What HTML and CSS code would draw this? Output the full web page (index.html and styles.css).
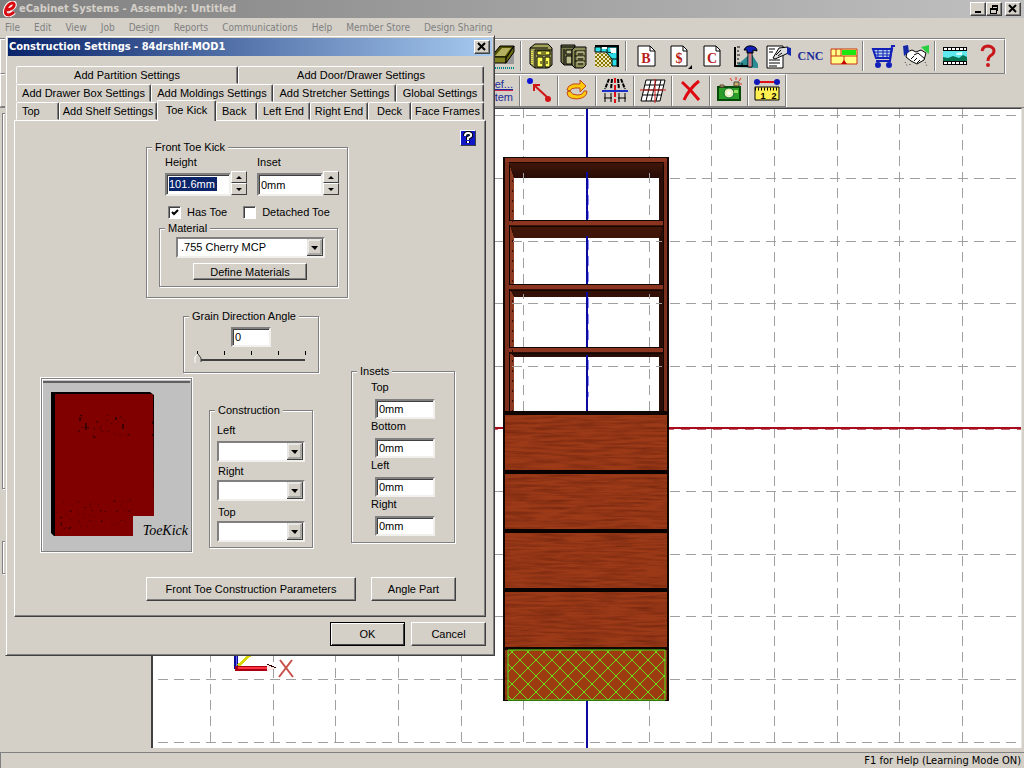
FILE: index.html
```html
<!DOCTYPE html>
<html lang="en">
<head>
<meta charset="utf-8">
<title>eCabinet Systems - Assembly: Untitled</title>
<link rel="stylesheet" href="styles.css">
</head>
<body class="app">
<header class="titlebar">
  <svg class="logo" width="16" height="16" viewBox="0 0 16 16" aria-hidden="true"><path d="M3 9Q10 9 12 5Q13 2 10 2Q6 3 4 8Q2 14 7 14Q10 13 12 11" fill="none" stroke="#fff" stroke-width="5"/><path d="M3 9Q10 9 12 5Q13 2 10 2Q6 3 4 8Q2 14 7 14Q10 13 12 11" fill="none" stroke="#d80c10" stroke-width="3"/></svg>
  <h1 class="title-text">eCabinet Systems - Assembly: Untitled</h1>
  <div class="caption-group">
    <button class="caption" aria-label="Minimize"><svg width="10" height="10"><path d="M2 8h6" stroke="#000" stroke-width="2"/></svg></button>
    <button class="caption" aria-label="Restore"><svg width="10" height="10" shape-rendering="crispEdges"><path d="M3 1h6M3 2h6M3 1v3M8 1v5H7M1 4h6M1 5h6M1 4v5h6V4" fill="none" stroke="#000"/></svg></button>
  </div>
  <button class="caption" aria-label="Close"><svg width="10" height="10"><path d="M1 1l7 7M8 1l-7 7" stroke="#000" stroke-width="2"/></svg></button>
</header>
<nav class="menubar">
  <a href="#">File</a><a href="#">Edit</a><a href="#">View</a><a href="#">Job</a><a href="#">Design</a><a href="#">Reports</a><a href="#">Communications</a><a href="#">Help</a><a href="#">Member Store</a><a href="#">Design Sharing</a>
</nav>
<div class="toolbar toolbar-main">
  <button class="tool tool-first" aria-label="Drawer box"><svg width="28" height="28"><path d="M2 26h24" stroke="#088" stroke-dasharray="1 1" stroke-width="2"/><path d="M15 22l10-13v13z" fill="#999"/><path d="M2 15L11 4H25L17 16z" fill="#505000" stroke="#000"/><path d="M6 14l7-8h9l-6 8z" fill="#b4b060"/><path d="M2 15h15v6H2z" fill="#808020" stroke="#000"/><path d="M17 16l8-12v6l-8 11z" fill="#686810" stroke="#000"/></svg></button>
  <span class="sep"></span>
  <button class="tool" aria-label="Cabinet"><svg width="28" height="28"><path d="M3 6L8 2H21L25 6V23L21 26H8L3 22z" fill="#a0a058" stroke="#000"/><path d="M3 6H8L21 6M8 8H25M8 8V26" fill="none" stroke="#000"/><path d="M10 9h13v4H10zM10 15h6v10h-6zM18 15h5v10h-5z" fill="#ff5" stroke="#000"/><path d="M14 11h5M14 19v3M20 19v3" stroke="#000"/><path d="M5 9v13" stroke="#eee64c" stroke-width="2" stroke-dasharray="1 1"/></svg></button>
  <button class="tool" aria-label="Cabinet group"><svg width="28" height="28"><path d="M1 3H15V23H4L1 20z" fill="#77774a" stroke="#000"/><path d="M1 5H15M4 7V23M6 8H12V12H6zM6 14H12V22H6z" fill="#bcbc8a" stroke="#000"/><path d="M12 8L15 5H26V23L23 26H15L12 23z" fill="#8c8c58" stroke="#000"/><path d="M15 9H25M15 14H25M15 19H25M15 9V26M18 12h5M18 17h5M18 22h5" stroke="#000"/><path d="M17 10h7M17 15h7M17 20h7" stroke="#d8d8b0"/></svg></button>
  <button class="tool" aria-label="Room layout"><svg width="28" height="28"><defs><pattern id="chk" width="4" height="4" patternUnits="userSpaceOnUse"><path d="M0 0h2v2H0zM2 2h2v2H2z" fill="#887700"/></pattern></defs><path d="M2 11h17v14H2z" fill="#eee8bc"/><path d="M2 11h17v14H2z" fill="url(#chk)"/><path d="M2 4H25V25" fill="none" stroke="#000" stroke-width="2"/><path d="M2 5H24V24H19V17L13 10H2z" fill="#2de0e8" stroke="#000"/><path d="M8 5v5M14 5v5L20 11M19 17h5" stroke="#000" fill="none"/><path d="M9 5h5v2H9zM17 6h6v5h-5z" fill="#fff"/></svg></button>
  <span class="sep"></span>
  <button class="tool" aria-label="Buy list"><svg width="28" height="28"><path d="M6 4H18L23 9V24H6z" fill="#fff" stroke="#000"/><path d="M18 4V9H23" fill="none" stroke="#000"/><text class="glyph" x="14" y="21">B</text></svg></button>
  <button class="tool" aria-label="Cost"><svg width="28" height="28"><path d="M6 4H18L22 8V24H6z" fill="#fff" stroke="#000"/><path d="M18 4V9H22" fill="none" stroke="#000"/><text class="glyph" x="14" y="21">$</text><path d="M27 23v4h-4z"/></svg></button>
  <button class="tool" aria-label="Cut list"><svg width="28" height="28"><path d="M6 4H18L22 8V24H6z" fill="#fff" stroke="#000"/><path d="M18 4V9H22" fill="none" stroke="#000"/><text class="glyph" x="14" y="21">C</text></svg></button>
  <button class="tool" aria-label="Construction tools"><svg width="28" height="28"><path d="M4 25L20 11L27 22V26z" fill="#2c8c94"/><path d="M4 5V24H18" fill="none" stroke="#000" stroke-width="2"/><path d="M6 5h3M6 9h2M6 13h3M6 17h2M6 21h3M11 21v3" stroke="#000"/><path d="M13 8Q15 3 21 4Q26 5 26 9L22 8V11H16V8z" fill="#1020b8" stroke="#000"/><path d="M17 11h4v14h-4z" fill="#eef" stroke="#000"/><path d="M19 11v14" stroke="#c00000"/></svg></button>
  <button class="tool" aria-label="Reports"><svg width="28" height="28"><path d="M3 4H19V26H3z" fill="#fff" stroke="#000"/><path d="M5 7h6M5 10h4M5 18h11M5 21h11M5 24h8" stroke="#000"/><path d="M9 16L15 6L24 5V11L20 13L11 17z" fill="#ddd" stroke="#000"/><path d="M12 13L17 8M14 14l4-3" stroke="#000"/><path d="M23 5l4 1v8l-4-2z" fill="#1828a8"/></svg></button>
  <button class="tool cnc">CNC</button>
  <button class="tool" aria-label="Nesting"><svg width="28" height="28"><path d="M1 7H27V22H1z" fill="#ff8" stroke="#c83010" stroke-width="1"/><path d="M12 8H26V13H12z" fill="#1ae810"/><path d="M1 14H27M6 7v7M11 7v7M14 14v8" stroke="#c83010"/><path d="M11 22l3-4 3 4z" fill="#c80000"/></svg></button>
  <span class="sep"></span>
  <button class="tool" aria-label="Shopping cart"><svg width="28" height="28" fill="none" stroke="#1220b8" stroke-width="2"><path d="M4 7H23L21 16H7z" fill="#b8d4e8"/><path d="M4 10H23M6 13H22M9 7v9M14 7v9M18 7v9" stroke-width="1"/><path d="M26 4h-3L21 19H7"/><circle cx="9" cy="23" r="2" fill="#1220b8"/><circle cx="20" cy="23" r="2" fill="#1220b8"/></svg></button>
  <button class="tool" aria-label="Partners"><svg width="28" height="28"><path d="M5 10L10 8L14 10L19 8L24 11L22 18L15 22L9 19L4 15z" fill="#fff" stroke="#000"/><path d="M12 13l4-2 7 6M9 17l3-3M12 19l3-3M15 21l3-3" fill="none" stroke="#000"/><path d="M1 4l5-1 1 7-5 4z" fill="#1428a8"/><path d="M19 5l8-2v9l-4-3z" fill="#28d040"/><path d="M3 20l3 5M8 22v3M23 20l2 4" stroke="#333" stroke-dasharray="1 2"/></svg></button>
  <span class="sep"></span>
  <button class="tool" aria-label="Video"><svg width="28" height="28"><path d="M2 5h24v18H2z"/><path d="M3 7h22M3 21h22" stroke="#fff" stroke-width="2" stroke-dasharray="3 1"/><path d="M2 9h24v10H2z" fill="#5fe8ee"/><path d="M2 19v-4l5 1 5-2 6 2 4-3 4 2v4z" fill="#087454"/><path d="M15 11l6-1v3h-5z" fill="#d8ffff"/></svg></button>
  <button class="tool" aria-label="Help"><svg width="28" height="28"><path d="M8 9Q9 4 14 4Q20 5 20 9Q20 12 16 14Q14 16 14 19" fill="none" stroke="#c8181c" stroke-width="3"/><circle cx="14" cy="23" r="2" fill="#c8181c"/></svg></button>
</div>
<div class="toolbar toolbar-edit">
  <button class="tool ref"><span class="ref-top">Ref...</span><span>Item</span></button>
  <span class="sep"></span>
  <button class="tool" aria-label="Move"><svg width="28" height="28"><path d="M9 8L23 21M9 14V8h6" fill="none" stroke="#d01818" stroke-width="2"/><circle cx="5" cy="4" r="3" fill="#0c14d8"/><circle cx="23" cy="22" r="3" fill="#d01818"/></svg></button>
  <span class="sep"></span>
  <button class="tool" aria-label="Rotate"><svg width="28" height="28"><path d="M17 3v4H10Q4 9 4 13l3 1q1-3 5-3h5v4l6-6z" fill="#ffc90c" stroke="#c04818"/><path d="M4 15q0 7 10 7q10-1 10-8h-3q-1 4-7 4q-5 0-7-4z" fill="#ffc90c" stroke="#c04818"/></svg></button>
  <span class="sep"></span>
  <button class="tool" aria-label="Align"><svg width="28" height="28"><path d="M8 2L4 12M11 2L10 12M17 2l1 10M20 2l4 10" stroke="#000" stroke-width="2" stroke-dasharray="4 1"/><path d="M4 16v9M10 16v9M18 16v9M24 16v9M3 21h8M17 21h8" stroke="#000"/><path d="M14 1V26" stroke="#e01018" stroke-width="2" stroke-dasharray="5 2"/><path d="M1 14H27" stroke="#1830c8" stroke-width="2"/></svg></button>
  <span class="sep"></span>
  <button class="tool" aria-label="Grid"><svg width="28" height="28"><path d="M7 3H26L21 24H2zM6 8H25M5 13H24M4 18H23M12 3L7 24M17 3l-5 21M22 3l-5 21" fill="#fff" stroke="#000"/><path d="M1 13H27M16 2V26" stroke="#d41c1c"/></svg></button>
  <span class="sep"></span>
  <button class="tool" aria-label="Delete"><svg width="28" height="28"><path d="M5 5Q14 13 22 23M22 4Q12 12 7 23" fill="none" stroke="#e00810" stroke-width="3"/></svg></button>
  <span class="sep"></span>
  <button class="tool" aria-label="Snapshot"><svg width="28" height="28"><path d="M3 10H25V23H3z" fill="#2c9e28" stroke="#064c08" stroke-width="2"/><path d="M5 8h4v2H5zM19 5h5v4h-5z" fill="#c8b070" stroke="#543"/><circle cx="14" cy="16" r="5" fill="#e8f0b8" stroke="#063"/><circle cx="14" cy="16" r="2" fill="#fff"/><path d="M19 13h4v3h-4z" fill="#9adf60"/><path d="M15 1l2 3M21 0v3M26 1l-2 3M27 7h-2" stroke="#e83018"/></svg></button>
  <span class="sep"></span>
  <button class="tool" aria-label="Measure"><svg width="28" height="28"><path d="M4 5H24" stroke="#e01018" stroke-width="2"/><circle cx="4" cy="5" r="3" fill="#1018b8"/><circle cx="24" cy="5" r="3" fill="#1018b8"/><path d="M2 10H26V23H2z" fill="#ffef50" stroke="#000"/><path d="M2 12H26" stroke="#000" stroke-width="3" stroke-dasharray="1 2"/><text class="ruler" x="10" y="22">1</text><text class="ruler" x="21" y="22">2</text></svg></button>
</div>
<main class="workspace">
  <aside class="side"><div class="side-frame side-tall"></div><div class="side-frame side-short"></div></aside>
  <section class="viewport" aria-label="Assembly view">
    <svg class="scene" width="100%" height="100%">
      <defs>
        <filter id="wood" x="0" y="0" width="100%" height="100%" color-interpolation-filters="sRGB"><feTurbulence type="fractalNoise" baseFrequency="0.03 0.4" numOctaves="3" seed="4"/><feColorMatrix values="0 0 0 0 .4  0 0 0 0 .12  0 0 0 0 .04  0 0 0 1.2 -0.42"/></filter>
        <pattern id="hatch" x="528" y="668" width="16" height="16" patternUnits="userSpaceOnUse"><path d="M-1 -1L17 17M17 -1L-1 17" stroke="#6ae01c"/></pattern>
        <linearGradient id="shade" x1="0" y1="0" x2="0" y2="1"><stop offset="0" stop-color="#401608"/><stop offset="1" stop-color="#280c06"/></linearGradient>
      </defs>
      <g transform="translate(-153 -109)" shape-rendering="crispEdges">
        <g stroke="#a0a0a0" stroke-dasharray="10 6">
          <path d="M158 115H3000M158 178H3000M158 241H3000M158 303H3000M158 366H3000M158 491H3000M158 554H3000M158 616H3000M158 679H3000M158 742H3000"/>
          <path d="M210 742V109M273 742V109M335 742V109M398 742V109M461 742V109M523 742V109M649 742V109M711 742V109M774 742V109M837 742V109M899 742V109M962 742V109"/>
        </g>
        <path d="M153 428H3000" stroke="#a80c1c" stroke-width="2"/><path d="M153 429H3000" stroke="#c86068" stroke-dasharray="9 7"/>
        <path d="M587 109V748" stroke="#0a0aa0" stroke-width="2"/>
        <path d="M503 157H669V701H503z" fill="#120603"/>
        <path d="M505 159H509V411H505zM664 159H668V411H664z" fill="#7b2f1c"/>
        <path d="M510 163L514 172V411H510z" fill="#8b3921"/><path d="M663 163L659 172V411H663z" fill="#2a0e07"/>
        <path d="M509 163H664L659 178H514z" fill="url(#shade)"/>
        <path d="M514 178H659V220H514zM514 238H659V284H514zM514 297H659V347H514zM514 357H659V411H514z" fill="#fff"/>
        <path d="M510 225H663L659 238H514zM510 289H663L659 297H514zM510 352H663L659 357H514z" fill="url(#shade)"/>
        <path d="M505 158H668V162H505zM509 221H663V225H509zM509 285H663V289H509zM509 348H663V352H509z" fill="#8b3520"/>
        <path d="M509 220H663M509 226H663M509 284H663M509 290H663M509 347H663M509 353H663" stroke="#120603"/>
        <g stroke="#a0a0a0" stroke-dasharray="10 6"><path d="M512 241H662M512 303H662M512 366H662M523 411V357M649 411V357M523 347V294M649 347V294M523 284V236M649 284V236M523 215V172M649 215V172"/></g>
        <path d="M587 172V220M587 236V284M587 292V347M587 355V411" stroke="#0a0aa0" stroke-width="2"/><path d="M588 179V219M588 240V283M588 298V346M588 360V397" stroke="#9090ff" stroke-dasharray="10 6"/>
        <path d="M512 180V411" stroke="#2a0e07" stroke-dasharray="2 8"/>
        <path d="M505 415H668V649H505zM505 650H668V700H505z" fill="#9c3a18"/>
        <g filter="url(#wood)"><path d="M505 415H668V700H505z"/></g>
        <path d="M504 413H669M504 648H669" stroke="#120603" stroke-width="2"/><path d="M504 472H669M504 531H669M504 590H669" stroke="#080302" stroke-width="4"/><path d="M504 157V701M668 157V701" stroke="#120603" stroke-width="2"/>
        <path d="M508 650H665V700H508z" fill="#9c3a10"/><path d="M508 650H665V700H508z" fill="url(#hatch)" stroke="#50e818" shape-rendering="auto"/>
        <path d="M236 640V669" stroke="#0c0c94" stroke-width="4"/><path d="M236 640V667" stroke="#6868ff"/>
        <path d="M238 666L250 655" stroke="#d8d800" stroke-width="3"/><path d="M235 668H268" stroke="#a80010" stroke-width="5"/><path d="M238 668H267" stroke="#ff3440" stroke-width="2"/><path d="M267 664L276 668L267 672z" fill="#fde8e8"/><path d="M267 664L276 668" stroke="#300"/>
        <path d="M280 660L293 677M292 660L279 677" stroke="#c85048" stroke-width="2" shape-rendering="auto"/>
      </g>
    </svg>
  </section>
</main>
<footer class="status">F1 for Help (Learning Mode ON)</footer>

<form class="dialog" role="dialog" aria-labelledby="dlg-title">
  <div class="dialog-title"><h2 class="title-text" id="dlg-title">Construction Settings - 84drshlf-MOD1</h2>
    <button type="button" class="caption" aria-label="Close"><svg width="10" height="10"><path d="M1 1l7 7M8 1l-7 7" stroke="#000" stroke-width="2"/></svg></button></div>
  <div class="dialog-body">
    <div class="tabs" role="tablist">
      <div class="tab-row row-a"><button type="button" role="tab">Add Partition Settings</button><button type="button" role="tab">Add Door/Drawer Settings</button></div>
      <div class="tab-row row-b"><button type="button" role="tab">Add Drawer Box Settings</button><button type="button" role="tab">Add Moldings Settings</button><button type="button" role="tab">Add Stretcher Settings</button><button type="button" role="tab">Global Settings</button></div>
      <div class="tab-row row-c"><button type="button" role="tab" class="tab-left">Top</button><button type="button" role="tab">Add Shelf Settings</button><button type="button" role="tab" class="active" aria-selected="true">Toe Kick</button><button type="button" role="tab" class="tab-left">Back</button><button type="button" role="tab">Left End</button><button type="button" role="tab">Right End</button><button type="button" role="tab">Deck</button><button type="button" role="tab">Face Frames</button></div>
    </div>
    <div class="panel" role="tabpanel">
      <div class="panel-head">
        <fieldset class="group front"><legend>Front Toe Kick</legend>
          <div class="dims">
            <div class="dim"><label for="height">Height</label><div class="spin"><div class="field selected-wrap"><input id="height" class="selected" value="101.6mm"></div><div class="arrows"><button type="button" class="up" aria-label="Increase height"></button><button type="button" class="down" aria-label="Decrease height"></button></div></div></div>
            <div class="dim"><label for="inset">Inset</label><div class="spin"><input id="inset" class="field" value="0mm"><div class="arrows"><button type="button" class="up" aria-label="Increase inset"></button><button type="button" class="down" aria-label="Decrease inset"></button></div></div></div>
          </div>
          <div class="checks"><label><input type="checkbox" checked>Has Toe</label><label><input type="checkbox">Detached Toe</label></div>
          <fieldset class="group material"><legend>Material</legend>
            <select class="combo" aria-label="Material"><option>.755 Cherry MCP</option></select>
            <button type="button" class="btn define">Define Materials</button>
          </fieldset>
        </fieldset>
        <button type="button" class="help" aria-label="Help"><svg width="14" height="14"><path d="M4 5Q4 2 7 2Q11 2 10 5Q9 6 7 7V9M7 10v2" fill="none" stroke="#000" stroke-width="4"/><path d="M4 5Q4 2 7 2Q11 2 10 5Q9 6 7 7V9M7 10v2" fill="none" stroke="#fff" stroke-width="2"/></svg></button>
      </div>
      <div class="settings">
        <fieldset class="group grain"><legend>Grain Direction Angle</legend>
          <input class="field angle" aria-label="Grain Direction Angle" value="0">
          <div class="ticks"><i></i><i></i><i></i><i></i><i></i></div>
          <input type="range" class="slider" aria-label="Grain angle slider" min="0" max="90" value="0">
        </fieldset>
        <figure class="preview">
          <svg width="147" height="168" aria-hidden="true"><defs><filter id="speck" x="0" y="0" width="100%" height="100%"><feTurbulence type="fractalNoise" baseFrequency="0.3" numOctaves="2" seed="8"/><feColorMatrix values="0 0 0 0 0 0 0 0 0 0 0 0 0 0 0 0 0 0 8 -5.4"/></filter></defs>
          <path d="M0 2H147" stroke="#000"/><path d="M8 12H107L111 15V136H90V156H11L8 153z"/><path d="M12 14H110L111 136H90V156H12z" fill="#800000"/><g filter="url(#speck)" opacity=".6"><path d="M34 35H88V58H34z"/></g><g filter="url(#speck)" opacity=".6"><path d="M14 120H88V150H14z"/></g><path d="M43 43v7M80 44v5M37 37v4M73 37v3M110 41v3M110 54v2" stroke="#000"/></svg>
          <figcaption>ToeKick</figcaption>
        </figure>
        <fieldset class="group construction"><legend>Construction</legend>
          <div class="stack"><label for="c-left">Left</label><select id="c-left" class="combo"><option></option></select></div>
          <div class="stack"><label for="c-right">Right</label><select id="c-right" class="combo"><option></option></select></div>
          <div class="stack"><label for="c-top">Top</label><select id="c-top" class="combo"><option></option></select></div>
        </fieldset>
        <fieldset class="group insets"><legend>Insets</legend>
          <div class="stack"><label for="i-top">Top</label><input id="i-top" class="field" value="0mm"></div>
          <div class="stack"><label for="i-bottom">Bottom</label><input id="i-bottom" class="field" value="0mm"></div>
          <div class="stack"><label for="i-left">Left</label><input id="i-left" class="field" value="0mm"></div>
          <div class="stack"><label for="i-right">Right</label><input id="i-right" class="field" value="0mm"></div>
        </fieldset>
      </div>
      <div class="panel-actions"><button type="button" class="btn params">Front Toe Construction Parameters</button><button type="button" class="btn angle-part">Angle Part</button></div>
    </div>
    <div class="dialog-actions"><button type="submit" class="btn ok">OK</button><button type="button" class="btn">Cancel</button></div>
  </div>
</form>
</body>
</html>
```
FILE: styles.css
```css
* { box-sizing: border-box; }
.app {
  --face: #d4d0c8;
  --dark: #404040;
  --mid: #808080;
  margin: 0;
  height: 100vh;
  display: flex;
  flex-direction: column;
  overflow: hidden;
  background: var(--face);
  color: #000;
  font: 11px/13px "Liberation Sans", Arial, sans-serif;
}
button, input, select { font: inherit; color: inherit; margin: 0; border-radius: 0; }
button { padding: 0; border: 0; background: var(--face); }
svg { display: block; }

.titlebar {
  display: flex;
  align-items: center;
  flex: 0 0 18px;
  padding: 0 3px 0 2px;
  background: linear-gradient(90deg, #808080, #c0c0c0);
  color: var(--face);
}
.title-text { margin: 0; font: bold 11px/18px "DejaVu Sans Condensed", "DejaVu Sans", sans-serif; white-space: nowrap; }
.titlebar .title-text { flex: 1; padding-left: 1px; }
.caption-group { display: flex; margin-right: 3px; }
.caption {
  display: flex;
  align-items: center;
  justify-content: center;
  width: 16px;
  height: 14px;
  color: #000;
  border: 1px solid;
  border-color: #fff var(--dark) var(--dark) #fff;
  box-shadow: inset -1px -1px var(--mid);
}
.menubar {
  display: flex;
  gap: 14px;
  flex: 0 0 21px;
  padding: 0 5px;
  font: 10px/20px "DejaVu Sans Condensed", "DejaVu Sans", sans-serif;
}
.menubar a { color: var(--mid); text-decoration: none; white-space: nowrap; }

.toolbar {
  display: flex;
  align-items: center;
  align-self: flex-start;
  border: 1px solid;
  border-color: #fff var(--mid) var(--mid) #fff;
  box-shadow: 1px 0 #fff;
}
.toolbar-main { height: 35px; padding-left: 487px; padding-bottom: 1px; box-shadow: 1px 0 #fff, 0 -1px var(--mid); }
.toolbar-edit { height: 33px; padding-left: 482px; }
.tool { display: flex; align-items: center; justify-content: center; width: 33px; height: 30px; }
.tool-first { width: 30px; }
.toolbar-edit .tool { width: 36px; }
.sep { width: 2px; height: 30px; background: linear-gradient(90deg, #808080 50%, #fff 50%); }
.toolbar-main .sep { margin: 0 2px; }
.glyph { font: bold 14px "Liberation Serif", serif; fill: #b81c20; text-anchor: middle; }
.ruler { font: bold 9px "Liberation Sans", sans-serif; text-anchor: middle; }
.cnc { font: bold 12px "Liberation Serif", serif; color: #1c2c98; }
.toolbar-edit .ref { flex-direction: column; align-items: flex-end; padding-right: 6px; color: #1c2c98; line-height: 12px; }
.ref-top { border-bottom: 1px solid #d02050; text-decoration: underline; }

.workspace { flex: 1; display: flex; min-height: 0; padding-right: 2px; border-top: 1px solid var(--mid); }
.side { flex: 0 0 151px; padding: 5px 6px 0 2px; }
.side-frame { border: 1px solid var(--mid); box-shadow: inset 1px 1px #fff, 1px 1px #fff; }
.side-tall { height: 376px; }
.side-short { height: 33px; margin-top: 52px; }
.viewport {
  flex: 1;
  min-width: 0;
  overflow: hidden;
  background: #fff;
  border-top: 1px solid var(--dark);
  border-left: 2px solid var(--dark);
  border-right: 1px solid #e8e6e0;
}
.status {
  flex: 0 0 16px;
  margin-top: 4px;
  padding-right: 3px;
  border-top: 1px solid var(--mid);
  border-left: 1px solid var(--mid);
  font: 11px/15px "DejaVu Sans Condensed", "DejaVu Sans", sans-serif;
  text-align: right;
}

.dialog {
  position: absolute;
  left: 5px;
  top: 35px;
  width: 490px;
  padding: 1px;
  background: var(--face);
  border: 1px solid;
  border-color: var(--face) var(--dark) var(--dark) var(--face);
  box-shadow: inset 1px 1px #fff, inset -1px -1px var(--mid);
}
.dialog-title {
  display: flex;
  align-items: center;
  justify-content: space-between;
  height: 18px;
  margin: 1px 1px 0;
  padding: 0 2px 0 1px;
  background: linear-gradient(90deg, #0a246a, #a6caf0);
  color: #fff;
}
.dialog-body { padding: 10px 7px 8px; }
.tabs { padding: 0 2px; }
.tab-row { display: grid; height: 18px; }
.row-a { grid-template-columns: 222fr 246fr; }
.row-b { grid-template-columns: 135fr 122fr 123fr 88fr; }
.row-c { grid-template-columns: 43fr 98fr 59fr 41fr 53fr 58fr 43fr 73fr; }
.tab-row button {
  height: 18px;
  white-space: nowrap;
  border: 1px solid;
  border-color: #fff var(--dark) transparent #fff;
  border-radius: 2px 2px 0 0;
  box-shadow: inset -1px 0 var(--mid);
}
.tab-row .tab-left { text-align: left; padding-left: 5px; }
.tab-row .active { position: relative; height: 21px; margin-top: -2px; border-bottom: 0; padding-bottom: 2px; }
.panel {
  height: 497px;
  padding: 9px 9px 0 0;
  border: 1px solid;
  border-color: #fff var(--dark) var(--dark) #fff;
  box-shadow: inset -1px -1px var(--mid);
}
.panel-head { display: flex; justify-content: space-between; align-items: flex-start; }
.help {
  width: 16px;
  height: 16px;
  background: #1018c8;
  border: 1px solid;
  border-color: #fff var(--dark) var(--dark) #fff;
}
.group {
  min-width: 0;
  margin: 0;
  padding: 0;
  border: 1px solid var(--mid);
  box-shadow: inset 1px 1px #fff, 1px 1px #fff;
}
.group > legend { margin-left: 5px; padding: 0 3px; background: var(--face); }
.field {
  width: 60px;
  height: 20px;
  padding: 0 2px;
  background: #fff;
  border: 2px solid;
  border-color: var(--mid) #f2f0ec #f2f0ec var(--mid);
  box-shadow: inset 1px 1px var(--dark);
}
.btn {
  height: 24px;
  border: 1px solid;
  border-color: #fff var(--dark) var(--dark) #fff;
  box-shadow: inset -1px -1px var(--mid);
}
.combo {
  appearance: none;
  height: 21px;
  padding: 0 18px 0 3px;
  border: 2px solid;
  border-color: var(--mid) #f2f0ec #f2f0ec var(--mid);
  background: #fff url("data:image/svg+xml,%3Csvg xmlns='http://www.w3.org/2000/svg' width='16' height='17'%3E%3Cpath d='M0 0h16v17H0z' fill='%23404040'/%3E%3Cpath d='M0 0h15v16H0z' fill='%23d4d0c8'/%3E%3Cpath d='M1 15V1h13' fill='none' stroke='%23fff'/%3E%3Cpath d='M14 1v14H1' fill='none' stroke='%23808080'/%3E%3Cpath d='M4 7h7l-3 4z'/%3E%3C/svg%3E") no-repeat right center;
}

.front { width: 202px; height: 157px; margin: 11px 0 0 131px; }
.dims { display: flex; gap: 10px; padding: 2px 0 0 18px; }
.dim > label { display: block; }
.spin { display: flex; width: 82px; margin-top: 2px; padding-top: 2px; }
.spin .field { width: 66px; height: 23px; }
.selected-wrap { display: flex; align-items: flex-start; padding: 2px; }
.selected { width: 48px; height: 14px; padding: 0; border: 0; background: #0a246a; color: #fff; }
.arrows { display: flex; flex-direction: column; width: 16px; margin-top: -2px; }
.arrows button {
  height: 12px;
  border: 1px solid;
  border-color: #fff var(--dark) var(--dark) #fff;
  background: var(--face) url("data:image/svg+xml,%3Csvg xmlns='http://www.w3.org/2000/svg' width='6' height='3'%3E%3Cpath d='M0 3h6L3 0z'/%3E%3C/svg%3E") no-repeat center;
}
.arrows .down { background-image: url("data:image/svg+xml,%3Csvg xmlns='http://www.w3.org/2000/svg' width='6' height='3'%3E%3Cpath d='M0 0h6L3 3z'/%3E%3C/svg%3E"); }
.checks { display: flex; gap: 16px; padding: 10px 0 0 21px; }
.checks label { display: flex; align-items: center; gap: 6px; white-space: nowrap; }
.checks input {
  appearance: none;
  width: 13px;
  height: 13px;
  background: #fff no-repeat center;
  border: 1px solid;
  border-color: var(--mid) #fff #fff var(--mid);
  box-shadow: inset 1px 1px var(--dark);
}
.checks input:checked { background-image: url("data:image/svg+xml,%3Csvg xmlns='http://www.w3.org/2000/svg' width='9' height='9'%3E%3Cpath d='M2 4l2 2 4-4' fill='none' stroke='%23000' stroke-width='2'/%3E%3C/svg%3E"); }
.material { display: flex; flex-direction: column; align-items: flex-start; width: 179px; height: 65px; margin: 3px 0 0 12px; }
.material .combo { width: 149px; margin: 2px 0 5px 16px; }
.define { width: 114px; height: 17px; margin-left: 33px; line-height: 14px; }

.settings {
  display: grid;
  grid-template-columns: 142px 9px 17px 104px 6px 32px 104px;
  grid-template-rows: 55px 9px auto;
  margin: 12px 0 0 26px;
}
.grain { grid-area: 1 / 2 / 3 / 6; height: 63px; }
.angle { display: block; width: 40px; margin: 4px 0 0 47px; }
.ticks { display: flex; justify-content: space-between; width: 109px; margin: 4px 0 0 13px; }
.ticks i { width: 1px; height: 4px; background: #000; }
.slider { appearance: none; display: block; width: 115px; height: 10px; margin: -2px 0 0 10px; background: linear-gradient(#404040, #404040) no-repeat 4px 6px / 107px 2px; }
.slider::-webkit-slider-thumb {
  appearance: none;
  width: 9px;
  height: 10px;
  background: url("data:image/svg+xml,%3Csvg xmlns='http://www.w3.org/2000/svg' width='9' height='10'%3E%3Cpath d='M1 9V4l3-3 3 4v4z' fill='%23d4d0c8'/%3E%3Cpath d='M1 10V4l3-3' fill='none' stroke='%23fff'/%3E%3Cpath d='M4 1l3 4v4' fill='none' stroke='%23404040'/%3E%3C/svg%3E");
}
.preview {
  grid-area: 3 / 1 / 4 / 3;
  position: relative;
  width: 151px;
  height: 174px;
  margin: 4px 0 0;
  padding: 1px;
  background: #c0c0c0;
  border: 1px solid var(--mid);
  outline: 1px solid #fff;
  box-shadow: inset 1px 1px #fff;
}
.preview figcaption { position: absolute; right: 3px; bottom: 12px; font: italic 14px/16px "Liberation Serif", serif; }
.construction { grid-area: 3 / 4 / 4 / 5; align-self: start; height: 144px; margin-top: 30px; }
.stack { display: flex; flex-direction: column; align-items: flex-start; }
.construction .stack { padding: 7px 0 0 7px; }
.construction .combo { width: 88px; margin-top: 4px; }
.construction .stack + .stack { padding-top: 3px; padding-left: 8px; }
.construction .stack + .stack .combo { margin-left: -1px; margin-top: 2px; }
.construction .stack:last-child { padding-top: 5px; }
.insets { grid-area: 2 / 7 / 4 / 8; align-self: start; height: 178px; }
.insets .stack { padding: 3px 0 0 19px; }
.insets .stack + .stack { padding-top: 1px; }
.insets .field { margin: 5px 0 0 4px; }
.panel-actions { display: flex; gap: 15px; margin: 25px 0 0 131px; }
.params { width: 210px; }
.angle-part { width: 85px; }
.dialog-actions { display: flex; justify-content: flex-end; gap: 6px; padding-top: 5px; }
.dialog-actions .btn { width: 75px; }
.dialog-actions .ok { border-color: #000; box-shadow: inset 1px 1px #fff, inset -1px -1px var(--dark); }
```
